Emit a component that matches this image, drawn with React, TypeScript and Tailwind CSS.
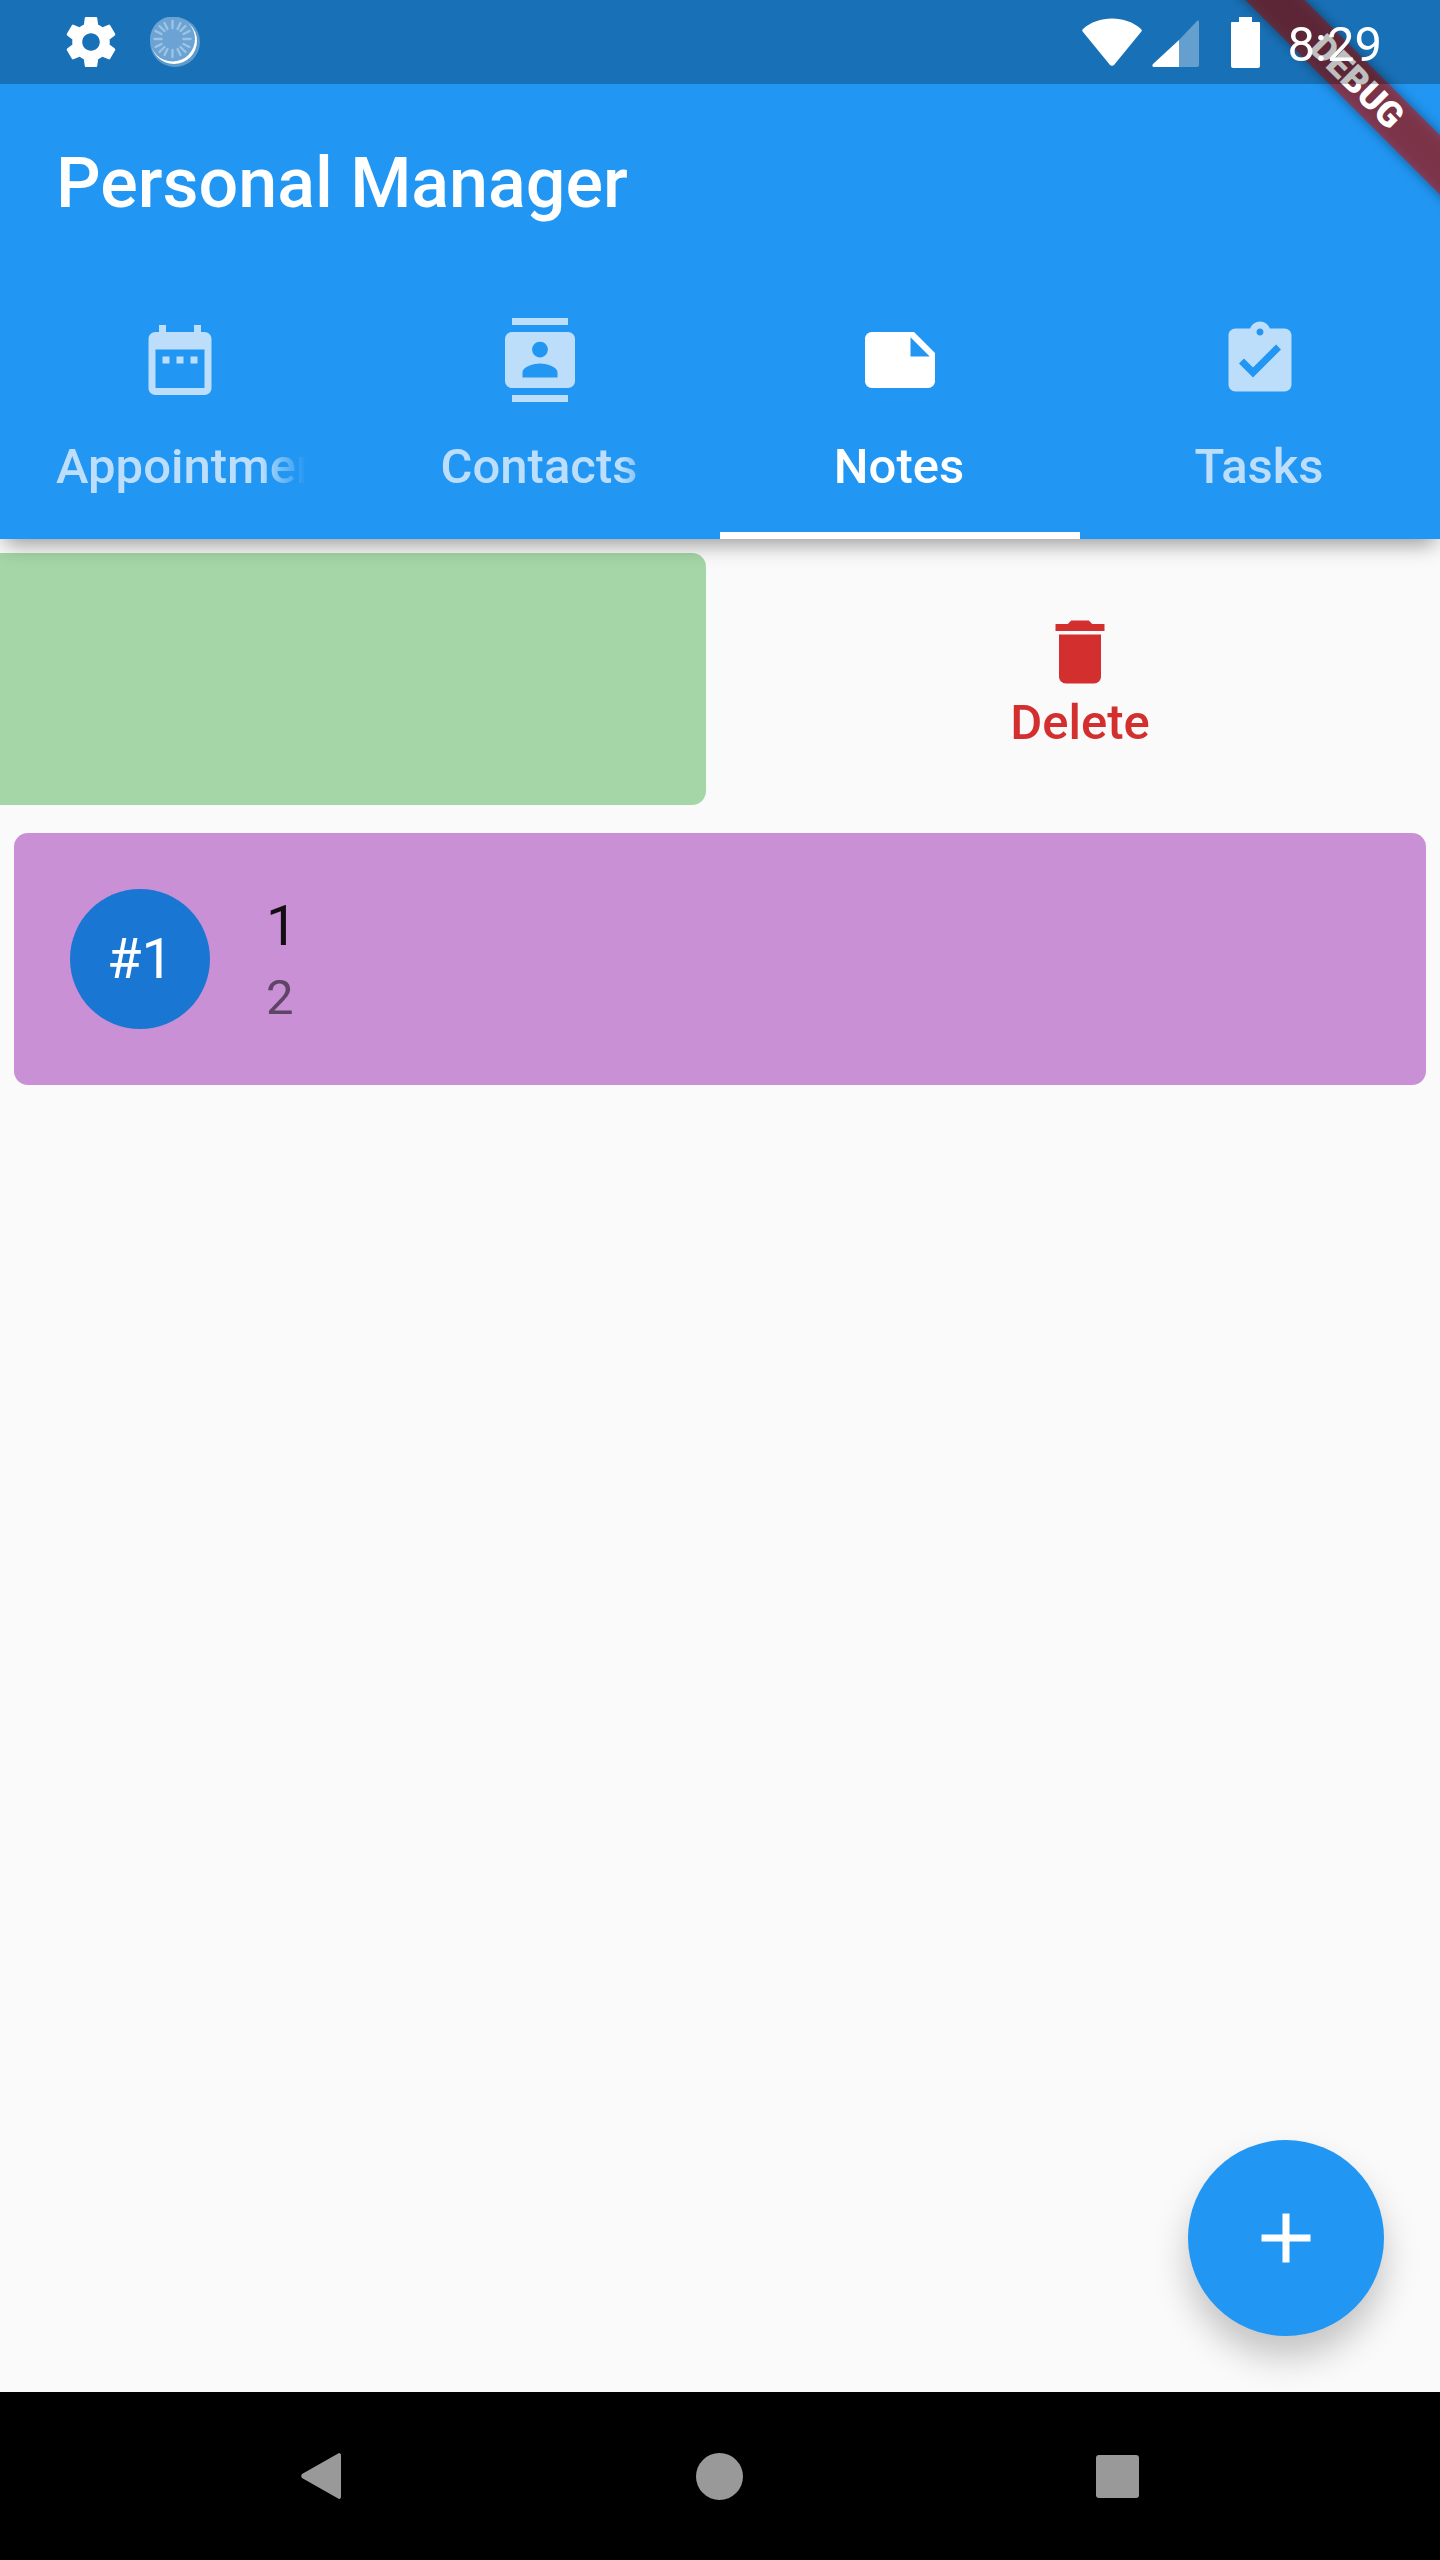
const ROBOTO = "font-['Roboto',sans-serif]";

const tabs = [
  {
    label: 'Appointments',
    d: 'M9 11H7v2h2v-2zm4 0h-2v2h2v-2zm4 0h-2v2h2v-2zm2-7h-1V2h-2v2H8V2H6v2H5c-1.11 0-1.99.9-1.99 2L3 20c0 1.1.89 2 2 2h14c1.1 0 2-.9 2-2V6c0-1.1-.9-2-2-2zm0 16H5V9h14v11z',
  },
  {
    label: 'Contacts',
    d: 'M20 0H4v2h16V0zM4 24h16v-2H4v2zM20 4H4c-1.1 0-2 .9-2 2v12c0 1.1.9 2 2 2h16c1.1 0 2-.9 2-2V6c0-1.1-.9-2-2-2zm-8 2.75c1.24 0 2.25 1.01 2.25 2.25s-1.01 2.25-2.25 2.25S9.75 10.24 9.75 9 10.76 6.75 12 6.75zM17 17H7v-1.5c0-1.67 3.33-2.5 5-2.5s5 .83 5 2.5V17z',
  },
  {
    label: 'Notes',
    d: 'M22 10l-6-6H4c-1.1 0-2 .9-2 2v12.01c0 1.1.9 1.99 2 1.99l16-.01c1.1 0 2-.89 2-1.99v-8zm-7-4.5l5.5 5.5H15V5.5z',
    active: true,
  },
  {
    label: 'Tasks',
    d: 'M19 3h-4.18C14.4 1.84 13.3 1 12 1c-1.3 0-2.4.84-2.82 2H5c-1.1 0-2 .9-2 2v14c0 1.1.9 2 2 2h14c1.1 0 2-.9 2-2V5c0-1.1-.9-2-2-2zm-7 0c.55 0 1 .45 1 1s-.45 1-1 1-1-.45-1-1 .45-1 1-1zm-2 14l-4-4 1.41-1.41L10 14.17l6.59-6.59L18 9l-8 8z',
  },
];

// translucent system bar, drawn over the app and its debug banner
function StatusBar() {
  return (
    <div className="absolute left-0 right-0 top-0 z-30 flex h-[84px] items-center bg-black/[0.25] pl-[61px] pr-[58px] text-white">
      <svg viewBox="0 0 24 24" className="h-[60px] w-[60px] fill-white">
        <path d="M19.43 12.98c.04-.32.07-.64.07-.98s-.03-.66-.07-.98l2.11-1.65c.19-.15.24-.42.12-.64l-2-3.46c-.12-.22-.39-.3-.61-.22l-2.49 1c-.52-.4-1.08-.73-1.69-.98l-.38-2.65C14.46 2.18 14.25 2 14 2h-4c-.25 0-.46.18-.49.42l-.38 2.65c-.61.25-1.17.59-1.69.98l-2.49-1c-.23-.09-.49 0-.61.22l-2 3.46c-.13.22-.07.49.12.64l2.11 1.65c-.04.32-.07.65-.07.98s.03.66.07.98l-2.11 1.65c-.19.15-.24.42-.12.64l2 3.46c.12.22.39.3.61.22l2.49-1c.52.4 1.08.73 1.69.98l.38 2.65c.03.24.24.42.49.42h4c.25 0 .46-.18.49-.42l.38-2.65c.61-.25 1.17-.59 1.69-.98l2.49 1c.23.09.49 0 .61-.22l2-3.46c.12-.22.07-.49-.12-.64l-2.11-1.65zM12 15.5c-1.93 0-3.5-1.57-3.5-3.5s1.57-3.5 3.5-3.5 3.5 1.57 3.5 3.5-1.57 3.5-3.5 3.5z" />
      </svg>
      <svg viewBox="0 0 50 50" className="ml-[29px] h-[50px] w-[50px]">
        <circle cx="25" cy="25" r="25" fill="#fff" fillOpacity=".3" />
        <circle cx="24" cy="24" r="23" fill="#fff" />
        <circle cx="22.5" cy="22" r="22.5" fill="#6ba3d4" />
        <g stroke="#fff" strokeOpacity=".35" strokeWidth="2.4" strokeLinecap="round">
          <path d="M22.5 4v7M22.5 33v7M4.5 22h7M33.5 22h7M9.5 9l5 5M30.5 30l5 5M9.5 35l5-5M30.5 14l5-5M14.5 6l3 6M27.5 32l3 6M5.5 14l6 3M33.5 27l6 3M5.5 30l6-3M33.5 17l6-3M14.5 38l3-6M27.5 12l3-6" />
        </g>
      </svg>
      <svg viewBox="0 0 60 48" className="ml-auto h-[48px] w-[60px] fill-white">
        <path d="M1 11C16-3 44-3 59 11c1 1 1 2 0 3L32 47c-1 1-3 1-4 0L1 14c-1-1-1-2 0-3z" />
      </svg>
      <svg viewBox="0 0 47 47" className="ml-[10px] mt-[3px] h-[47px] w-[47px] fill-white">
        <path d="M27 20L1 44c-1 1-1 3 1 3h25z" />
        <path d="M27 20L45 1c1-1 2 0 2 1v43c0 1-1 2-2 2H27z" fillOpacity=".33" />
      </svg>
      <div className="ml-[32px] flex flex-col items-center">
        <div className="h-[5px] w-[13px] bg-white" />
        <div className="h-[46px] w-[29px] rounded-b-[2px] rounded-t-[1px] bg-white" />
      </div>
      <span className={`${ROBOTO} ml-[28px] mt-[4px] text-[49px] leading-none`}>8:29</span>
    </div>
  );
}

function TabBar() {
  return (
    <div className="grid h-[259px] grid-cols-4">
      {tabs.map((tab) => (
        <div
          key={tab.label}
          className={`flex flex-col items-center pt-[38px] ${tab.active ? 'border-b-[7px] border-white text-white' : 'text-[#bcdefb]'}`}
        >
          <svg viewBox="0 0 24 24" className="h-[84px] w-[84px] fill-current">
            <path d={tab.d} />
          </svg>
          <div className="mt-[36px] w-[252px] overflow-hidden pr-[2px] text-center [mask-image:linear-gradient(to_right,black_82%,transparent)]">
            <span className={`${ROBOTO} block whitespace-nowrap text-[49px] font-medium leading-[58px] ${tab.label === 'Appointments' ? 'pl-[2px] text-left' : ''}`}>
              {tab.label}
            </span>
          </div>
        </div>
      ))}
    </div>
  );
}

export default function App() {
  return (
    <div className={`${ROBOTO} relative flex h-[2560px] w-[1440px] flex-col overflow-hidden bg-[#fafafa]`}>
      <StatusBar />

      <header className="relative z-10 bg-[#2196f3] pt-[84px] shadow-[0_10px_20px_-5px_rgba(0,0,0,0.4)]">
        <div className="flex h-[196px] items-center pl-[56px] pt-[3px] text-[70px] font-medium text-white">Personal Manager</div>
        <TabBar />
      </header>

      <main className="relative flex-1 pt-[14px]">
        <div className="grid h-[252px] grid-cols-2">
          <div className="mr-[14px] rounded-r-[14px] bg-[#a5d6a7]" />
          <div className="flex flex-col items-center justify-center pt-[3px] text-[#d32f2f]">
            <svg viewBox="0 0 24 24" className="h-[84px] w-[84px] fill-current">
              <path d="M6 19c0 1.1.9 2 2 2h8c1.1 0 2-.9 2-2V7H6v12zM19 4h-3.5l-1-1h-5l-1 1H5v2h14V4z" />
            </svg>
            <span className="text-[49px] font-medium leading-[58px]">Delete</span>
          </div>
        </div>

        <div className="mx-[14px] mt-[28px] flex h-[252px] items-center rounded-[14px] bg-[#c990d5] pl-[56px]">
          <div className="flex h-[140px] w-[140px] items-center justify-center rounded-full bg-[#1976d2] text-[56px] text-white">#1</div>
          <div className="ml-[56px] flex flex-col">
            <span className="text-[56px] leading-[70px] text-black/90">1</span>
            <span className="mt-[8px] text-[49px] leading-[58px] text-[#5f4467]">2</span>
          </div>
        </div>

        <button className="absolute bottom-[56px] right-[56px] flex h-[196px] w-[196px] items-center justify-center rounded-full bg-[#2196f3] shadow-[0_21px_35px_rgba(0,0,0,0.22)]">
          <svg viewBox="0 0 24 24" className="h-[84px] w-[84px] fill-white">
            <path d="M19 13h-6v6h-2v-6H5v-2h6V5h2v6h6v2z" />
          </svg>
        </button>
      </main>

      <nav className="flex h-[168px] items-center bg-black pl-[301px] pr-[301px]">
        <svg viewBox="0 0 40 46" className="h-[46px] w-[40px] fill-[#999]">
          <path d="M38 0c1 0 2 1 2 2v42c0 1-1 2-2 2L1 25c-1-1-1-3 0-4z" />
        </svg>
        <div className="ml-[355px] h-[47px] w-[47px] rounded-full bg-[#999]" />
        <div className="ml-auto h-[43px] w-[43px] rounded-[3px] bg-[#999]" />
      </nav>

      {/* debug banner sits over the app, under the system bar */}
      <div className="pointer-events-none absolute right-0 top-0 z-20 h-[240px] w-[240px] overflow-hidden">
        <div className="absolute left-[-43px] top-[61px] h-[42px] w-[400px] rotate-45 bg-black/40 blur-[6px]" />
        <div className="absolute left-[-43px] top-[61px] flex h-[42px] w-[400px] rotate-45 items-center justify-center bg-[#b71c1c]/[0.63] text-[36px] font-black leading-none text-white">
          DEBUG
        </div>
      </div>
    </div>
  );
}
